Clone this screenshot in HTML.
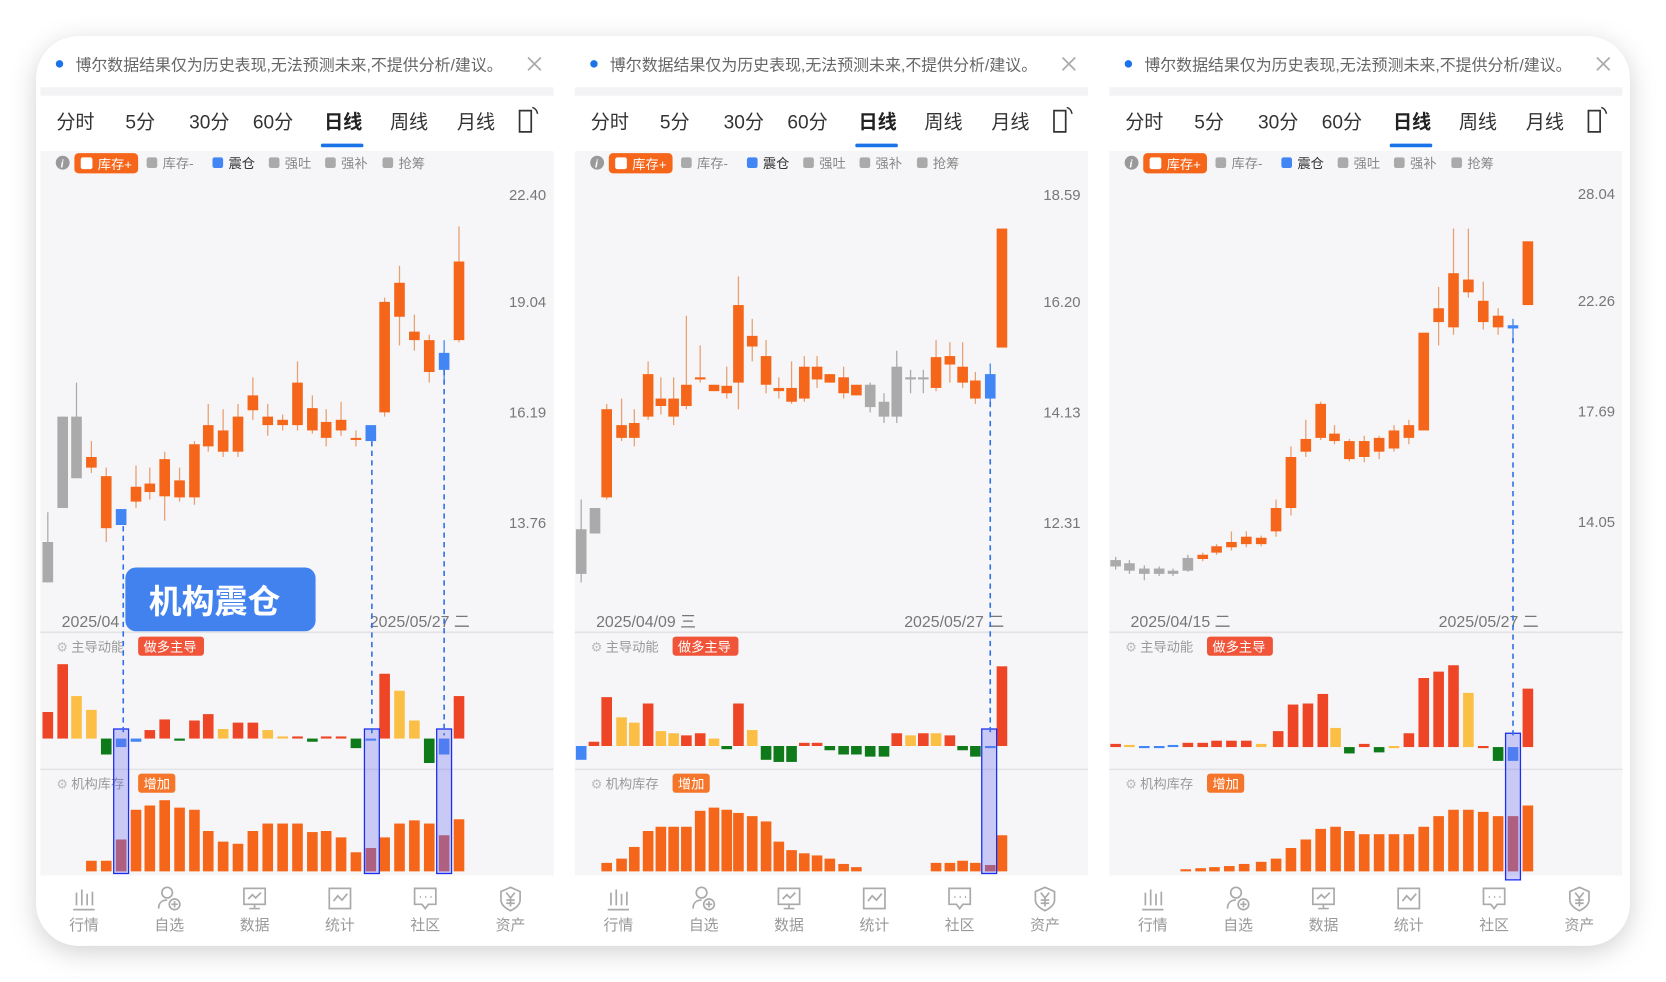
<!DOCTYPE html>
<html><head><meta charset="utf-8"><style>
html,body{margin:0;padding:0;background:#fff;width:1666px;height:982px;overflow:hidden}
svg{display:block}
text{font-family:"Liberation Sans","Noto Sans CJK SC",sans-serif}
</style></head><body>
<svg id="s" width="1666" height="982" viewBox="0 0 1568 924" xmlns="http://www.w3.org/2000/svg">
<defs>
<filter id="sh" x="-10%" y="-10%" width="120%" height="125%"><feDropShadow dx="0" dy="6" stdDeviation="12" flood-color="#000" flood-opacity="0.18"/></filter>
</defs>
<rect x="34" y="34" width="1500" height="856" rx="40" fill="#fff" filter="url(#sh)"/>
<g id="panels"></g>
<g id="texts" font-size="15" fill="#333">
</g>
</svg>
<script>
var NS="http://www.w3.org/2000/svg",P=document.getElementById('panels');
function el(t,a,txt){var e=document.createElementNS(NS,t);for(var k in a)e.setAttribute(k,a[k]);if(txt!=null)e.textContent=txt;P.appendChild(e);return e;}
var C={o:'#f5661a',r:'#ee4526',y:'#fbbf45',g:'#0f7a1a',b:'#4285f4',k:'#aaaaaa',d:'#cc5a4a'};
var panels=[
{x:38,prices:['22.40','19.04','16.19','13.76'],d1:'2025/04',d2:'2025/05/27 二',z:695,
c:[[45,510,548,482,548,'k'],[59,392,478,392,478,'k'],[72,392,450,360,450,'k'],[86,430,440,415,445,'o'],[100,448,497,440,510,'o'],[114,479,494,479,494,'b'],[128,458,472,438,478,'o'],[141,455,463,440,470,'o'],[155,432,467,425,490,'o'],[169,452,468,440,472,'o'],[183,418,468,415,475,'o'],[196,400,420,380,425,'o'],[210,405,425,385,430,'o'],[224,392,425,380,430,'o'],[238,372,386,355,395,'o'],[252,392,400,380,410,'o'],[266,395,400,390,405,'o'],[280,360,400,340,405,'o'],[294,384,405,372,408,'o'],[307,397,412,385,420,'o'],[321,395,405,378,410,'o'],[335,412,414,405,420,'o'],[349,400,415,400,415,'b'],[362,284,388,280,392,'o'],[376,266,298,250,325,'o'],[390,312,320,296,330,'o'],[404,320,350,315,360,'o'],[418,332,348,320,360,'b'],[432,246,320,213,322,'o']],
m:[[45,670,'r'],[59,625,'r'],[72,655,'y'],[86,668,'y'],[100,710,'g'],[114,703,'b'],[128,698,'b'],[141,687,'r'],[155,677,'r'],[169,697,'g'],[183,678,'r'],[196,672,'r'],[210,686,'y'],[224,680,'r'],[238,680,'r'],[252,687,'y'],[266,693,'y'],[280,693,'r'],[294,698,'g'],[307,693,'r'],[321,693,'r'],[335,704,'g'],[349,697,'b'],[362,634,'r'],[376,650,'y'],[390,678,'y'],[404,718,'g'],[418,710,'b'],[432,655,'r']],
v:[[86,810],[100,810],[114,790,1],[128,762],[141,758],[155,753],[169,760],[183,762],[196,782],[210,792],[224,794],[238,782],[252,775],[266,775],[280,775],[294,783],[307,782],[321,788],[335,802],[349,798,1],[362,788],[376,775],[390,772],[404,775],[418,786,1],[432,771]],
dash:[[116,495],[350,415],[418,348]],box:[[107,686],[343,686],[411,686]],pl:[183,284,388,492]},
{x:541,prices:['18.59','16.20','14.13','12.31'],d1:'2025/04/09 三',d2:'2025/05/27 二',z:702,
c:[[547,498,540,470,548,'k'],[560,478,502,478,502,'k'],[571,385,468,380,470,'o'],[585,400,412,375,415,'o'],[597,398,412,385,420,'o'],[610,352,392,340,395,'o'],[622,375,382,355,390,'o'],[634,375,392,355,400,'o'],[646,362,382,297,385,'o'],[659,355,357,325,360,'o'],[672,362,368,362,368,'o'],[684,363,370,345,375,'o'],[695,287,360,260,385,'o'],[708,316,326,300,340,'o'],[721,335,362,320,370,'o'],[733,365,368,355,375,'o'],[745,365,378,340,380,'o'],[757,345,375,335,378,'o'],[769,345,357,335,365,'o'],[781,352,360,352,360,'o'],[794,355,370,345,375,'o'],[806,362,372,362,372,'o'],[819,362,383,360,388,'k'],[832,378,392,370,398,'k'],[844,345,392,330,398,'k'],[857,355,357,348,370,'k'],[869,355,357,348,370,'k'],[881,336,365,320,368,'o'],[894,335,343,322,360,'o'],[906,345,360,322,365,'o'],[918,358,375,350,380,'o'],[932,352,375,342,380,'b'],[943,215,327,215,327,'o']],
m:[[547,715,'b'],[559,698,'r'],[571,656,'r'],[585,675,'y'],[597,680,'y'],[610,662,'r'],[622,688,'y'],[634,690,'y'],[646,692,'r'],[659,690,'r'],[672,695,'y'],[684,705,'g'],[695,662,'r'],[708,687,'y'],[721,715,'g'],[733,717,'g'],[745,717,'g'],[757,699,'r'],[769,699,'r'],[781,706,'g'],[794,710,'g'],[806,710,'g'],[819,712,'g'],[832,712,'g'],[844,690,'r'],[857,692,'y'],[869,690,'r'],[881,690,'y'],[894,692,'r'],[906,706,'g'],[918,712,'g'],[932,704,'b'],[943,627,'r']],
v:[[571,812],[585,808],[597,797],[610,782],[622,778],[634,778],[646,778],[659,763],[672,760],[684,762],[695,765],[708,768],[721,773],[733,792],[745,800],[757,803],[769,805],[781,808],[794,813],[806,816],[881,812],[894,812],[906,810],[918,812],[932,814,1],[943,786]],
dash:[[932,378]],box:[[924,686]],pl:[183,284,388,492]},
{x:1044,prices:['28.04','22.26','17.69','14.05'],d1:'2025/04/15 二',d2:'2025/05/27 二',z:703,
c:[[1050,527,533,524,536,'k'],[1063,530,537,527,540,'k'],[1077,535,540,532,546,'k'],[1091,535,540,533,542,'k'],[1104,537,540,535,542,'k'],[1118,525,537,522,538,'k'],[1132,522,526,520,528,'o'],[1145,514,520,512,522,'o'],[1159,510,515,500,518,'o'],[1173,505,512,500,515,'o'],[1187,506,512,504,514,'o'],[1201,478,500,470,505,'o'],[1215,430,478,420,485,'o'],[1229,413,425,395,430,'o'],[1243,380,412,378,414,'o'],[1256,408,415,400,418,'o'],[1270,415,432,413,434,'o'],[1284,415,430,410,435,'o'],[1298,412,425,410,432,'o'],[1312,405,422,400,425,'o'],[1326,400,412,395,418,'o'],[1340,313,405,313,405,'o'],[1354,290,303,270,325,'o'],[1368,257,308,215,315,'o'],[1382,263,275,215,280,'o'],[1396,283,303,265,310,'o'],[1410,297,308,290,315,'o'],[1424,306,309,300,322,'b'],[1438,227,287,227,287,'o']],
m:[[1050,700,'r'],[1063,701,'y'],[1077,702,'b'],[1091,702,'b'],[1104,701,'b'],[1118,699,'r'],[1132,699,'r'],[1145,697,'r'],[1159,697,'r'],[1173,697,'r'],[1187,700,'y'],[1203,688,'r'],[1217,663,'r'],[1231,662,'r'],[1245,653,'r'],[1257,685,'y'],[1270,709,'g'],[1284,700,'r'],[1298,708,'g'],[1312,702,'y'],[1326,690,'r'],[1340,638,'r'],[1354,632,'r'],[1368,626,'r'],[1382,652,'y'],[1396,702,'r'],[1410,716,'g'],[1424,716,'b'],[1438,648,'r']],
v:[[1116,818],[1130,817],[1143,816],[1157,815],[1171,813],[1187,811],[1201,808],[1215,798],[1229,790],[1243,780],[1257,778],[1270,782],[1284,785],[1298,785],[1312,785],[1326,785],[1340,778],[1354,768],[1368,762],[1382,762],[1396,764],[1410,768],[1424,768,1],[1438,758]],
dash:[[1424,318]],box:[[1417,690]],pl:[182,283,387,491]}];
var tabs=[['分时',15],['5分',80],['30分',140],['60分',200],['日线',267],['周线',329],['月线',392]];
var nav=['行情','自选','数据','统计','社区','资产'];
var L=[['库存-',100],['震仓',162],['强吐',215],['强补',268],['抢筹',322]];
panels.forEach(function(p,i){
 var x=p.x,W=483;
 // notice
 el('circle',{cx:x+18,cy:60,r:3.5,fill:'#1a73e8'});
 el('text',{x:x+33,y:66,'font-size':15,fill:'#666'},'博尔数据结果仅为历史表现,无法预测未来,不提供分析/建议。');
 el('path',{d:'M'+(x+459)+' 54l12 12M'+(x+471)+' 54l-12 12',stroke:'#aaa','stroke-width':1.6});
 el('rect',{x:x,y:82,width:W,height:8,fill:'#f3f3f5'});
 tabs.forEach(function(t){el('text',{x:x+t[1],y:121,'font-size':18,fill:t[0]=='日线'?'#222':'#333','font-weight':t[0]=='日线'?'bold':'normal'},t[0]);});
 el('rect',{x:x+264,y:135,width:40,height:3.5,rx:1.5,fill:'#1a73e8'});
 el('path',{d:'M'+(x+451)+' 104h11v20h-11z',stroke:'#333','stroke-width':1.6,fill:'none'});
 el('path',{d:'M'+(x+463)+' 101q4 1 5 6',stroke:'#333','stroke-width':1.4,fill:'none'});
 // chart bg
 el('rect',{x:x,y:142,width:W,height:682,fill:'#f6f6f8'});
 el('line',{x1:x,y1:595,x2:x+W,y2:595,stroke:'#e3e3e6','stroke-width':1.5});
 el('line',{x1:x,y1:724,x2:x+W,y2:724,stroke:'#e3e3e6','stroke-width':1.5});
 // legend
 el('circle',{cx:x+21,cy:153,r:6.5,fill:'#999'});
 el('text',{x:x+19,y:157.5,'font-size':10,fill:'#fff','font-style':'italic','font-weight':'bold'},'i');
 el('rect',{x:x+32,y:144,width:60,height:19,rx:4,fill:'#f5661a'});
 el('rect',{x:x+38,y:148,width:11,height:11,rx:2,fill:'#fff'});
 el('text',{x:x+54,y:159,'font-size':12.5,fill:'#fff'},'库存+');
 L.forEach(function(l){el('rect',{x:x+l[1],y:148,width:10,height:10,rx:2,fill:l[0]=='震仓'?'#4285f4':'#aaa'});el('text',{x:x+l[1]+15,y:158,'font-size':12.5,fill:l[0]=='震仓'?'#333':'#888'},l[0]);});
 p.prices.forEach(function(v,j){el('text',{x:x+476,y:p.pl[j]+5,'font-size':14,fill:'#777','text-anchor':'end'},v);});
 // candles
 p.c.forEach(function(c){var col=C[c[5]];el('line',{x1:c[0],y1:c[3],x2:c[0],y2:c[4],stroke:col=='#f5661a'?'#e8a070':col,'stroke-width':1.2});el('rect',{x:c[0]-5,y:c[1],width:10,height:Math.max(c[2]-c[1],1.5),fill:col});});
 el('text',{x:x+20,y:590,'font-size':15,fill:'#777'},p.d1);
 el('text',{x:x+310,y:590,'font-size':15,fill:'#777'},p.d2);
 // momentum
 el('text',{x:x+15,y:613,'font-size':12,fill:'#bbb'},'⚙');
 el('text',{x:x+29,y:613,'font-size':12.5,fill:'#999'},'主导动能');
 el('rect',{x:x+92,y:599,width:62,height:18,rx:3,fill:'#f0553a'});
 el('text',{x:x+97,y:613,'font-size':12.5,fill:'#fff'},'做多主导');
 p.m.forEach(function(m){var y1=Math.min(m[1],p.z),h=Math.max(Math.abs(m[1]-p.z),2);el('rect',{x:m[0]-5,y:y1,width:10,height:h,fill:C[m[2]]});});
 // inventory
 el('text',{x:x+15,y:742,'font-size':12,fill:'#bbb'},'⚙');
 el('text',{x:x+29,y:742,'font-size':12.5,fill:'#999'},'机构库存');
 el('rect',{x:x+92,y:728,width:35,height:18,rx:3,fill:'#f5762a'});
 el('text',{x:x+97,y:742,'font-size':12.5,fill:'#fff'},'增加');
 p.v.forEach(function(v){el('rect',{x:v[0]-5,y:v[1],width:10,height:820-v[1],fill:v[2]?C.d:C.o});});
 p.box.forEach(function(b){el('rect',{x:b[0],y:b[1],width:14,height:(i==2?138:136),fill:'rgba(110,110,240,0.33)',stroke:'#1a2ef0','stroke-width':1.2});});
 p.dash.forEach(function(d){el('line',{x1:d[0],y1:d[1],x2:d[0],y2:692,stroke:'#2f6fe8','stroke-width':1.5,'stroke-dasharray':'5 4'});});
 // nav
 nav.forEach(function(n,k){var cx=x+41+k*80.3;el('text',{x:cx,y:875,'font-size':14,fill:'#999','text-anchor':'middle'},n);
  var g='stroke="#aaa" stroke-width="1.6" fill="none"';
  var s=el('g',{transform:'translate('+(cx-12)+',834)'});
  var d=['<path d="M2 22h20M5 6v12M10 3v15M15 7v11M20 5v13" '+g+'/>',
  '<circle cx="10" cy="6" r="5" '+g+'/><path d="M2 21c0-6 4-8 8-8" '+g+'/><circle cx="17" cy="17" r="5" '+g+'/><path d="M17 14v6M14 17h6" '+g+'/>',
  '<rect x="2" y="2" width="20" height="15" '+g+'/><path d="M6 12l4-4 3 3 5-5M12 17v4M7 21h10" '+g+'/>',
  '<rect x="2" y="2" width="20" height="19" '+g+'/><path d="M6 14l4-5 4 4 5-6" '+g+'/>',
  '<path d="M2 2h20v15h-7l-3 4-3-4H2z" '+g+'/><path d="M7 10h1M12 10h1M17 10h1" stroke="#aaa" stroke-width="2"/>',
  '<path d="M12 1l9 4v8c0 5-5 8-9 10-4-2-9-5-9-10V5z" '+g+'/><path d="M8 6l4 5 4-5M12 11v8M8 13h8M8 16h8" '+g+'/>'][k];
  s.innerHTML=d;});
});
// tooltip box
el('rect',{x:118,y:534,width:179,height:60,rx:10,fill:'#4282ef'});
el('text',{x:140,y:577,'font-size':31,fill:'#fff','font-weight':'bold'},'机构震仓');
</script>
</body></html>
